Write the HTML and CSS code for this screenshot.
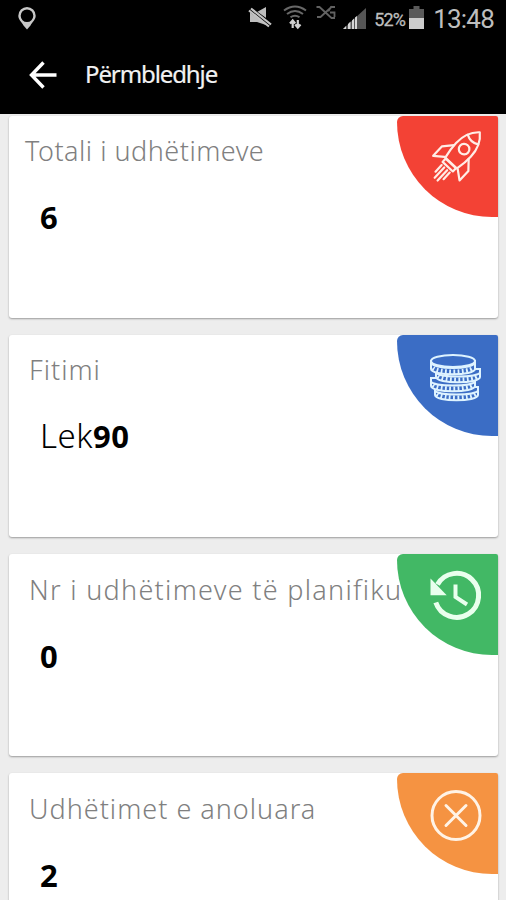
FILE: index.html
```html
<!DOCTYPE html>
<html lang="sq">
<head>
    <meta charset="UTF-8">
    <meta name="viewport" content="width=device-width, initial-scale=1.0">
    <title>Përmbledhje</title>
    <link rel="stylesheet" href="styles.css">
</head>
<body>
    <header class="header">
        <!-- Status bar -->
        <div class="status-bar">
            <svg class="pin" width="18" height="23" viewBox="0 0 18 23">
                <path fill="#c8c8c8" fill-rule="evenodd" d="M9 0a8.700 8.700 0 0 0-8.700 8.700C.3 13 4 15 5.500 18.500L9 22.500l3.500-4C14 15 17.700 13 17.700 8.700A8.700 8.700 0 0 0 9 0zm0 2.400a6.300 6.300 0 1 1 0 12.600A6.300 6.300 0 0 1 9 2.400z"/>
            </svg>
            <svg class="signals" width="122" height="30" viewBox="0 0 122 30">
                <!-- muted -->
                <path fill="#bdbdbd" d="M2 12h7l9-5v18l-9-3H2z"/>
                <path stroke="#000" stroke-width="5" d="M0 8l25 18"/>
                <path stroke="#c4c4c4" stroke-width="2.200" d="M1 10.500l20 16M3 8.500l20 16"/>
                <!-- wifi -->
                <g fill="none" stroke="#686868" stroke-width="2">
                    <path d="M36 10.500q11-8 22 0M39 14q8-6 16 0M42.500 17.300q4.500-3.300 9 0"/>
                </g>
                <path fill="none" stroke="#d0d0d0" stroke-width="2.200" d="M44.700 28v-7M49.800 20v7M42 23.500l2.700-3 2.500 3M47.200 24.500l2.600 3 2.700-3"/>
                <!-- no data -->
                <path fill="none" stroke="#626262" stroke-width="1.800" d="M68.500 7h3l12 11h3.500M69 17h3.500L84 6.500M87 7h-4l-2.500 4M82 12.500h4.500V17"/>
                <!-- signal -->
                <path fill="#555" d="M118 8v21H95z"/>
                <path fill="#d6d6d6" d="M95 29l3-3v3zM100 29v-5l2.500-2.500V29zM104 29v-8.500l2-2V29zM107 29V17.500l2-1.500v13z"/>
            </svg>
            <span class="percent">52%</span>
            <svg class="battery" width="15" height="23" viewBox="0 0 15 23">
                <path fill="#5a5a5a" d="M4.500 0h6v3H15v20H0V3h4.500z"/>
                <path fill="#ccc" d="M0 12h15v11H0z"/>
            </svg>
            <span class="clock">13:48</span>
        </div>
        <div class="app-bar">
            <svg class="back" width="28" height="28" viewBox="0 0 28 28">
                <path fill="none" stroke="#fff" stroke-width="3.400" d="M14.500 1.500L2.500 14l12 12.500M3 14H27.500"/>
            </svg>
            <h1>Përmbledhje</h1>
        </div>
    </header>

    <main class="cards">
        <section class="card total">
            <h2>Totali i udhëtimeve</h2>
            <p class="value"><b>6</b></p>
            <div class="badge red">
                <svg width="101" height="101" viewBox="0 0 101 101">
                    <g fill="none" stroke="#ffede6" stroke-width="2.200" stroke-linejoin="round" stroke-linecap="round" transform="translate(63 37.500) rotate(43)">
                        <path d="M0-29C-7-23-10-14-10-5c0 7 1 13 2 18H8c1-5 2-11 2-18C10-14 7-23 0-29z"/>
                        <path d="M-7-19q7 4 14 0"/>
                        <circle cx="0" cy="-6" r="5.300"/>
                        <path d="M-10-2l-8 9v13l9-7M10-2l8 9v13l-9-7"/>
                        <path d="M-7 13.500H7V18H-7z"/>
                        <path d="M-5.500 21v9M-2 21v14M2 21v14M5.500 21v9"/>
                    </g>
                </svg>
            </div>
        </section>

        <section class="card profit">
            <h2>Fitimi</h2>
            <p class="value">Lek<b>90</b></p>
            <div class="badge blue">
                <svg width="101" height="101" viewBox="0 0 101 101">
                    <g fill="#3b6dc5" stroke="#def3ff" stroke-width="2">
                        <path d="M38 52v8c0 7 43 7 43 0v-8z"/>
                        <path d="M34 43v8c0 7 44 7 44 0v-8z"/>
                        <path d="M39 34v8c0 7 44 7 44 0v-8z"/>
                        <path d="M34 26v8c0 7 44 7 44 0v-8z"/>
                        <ellipse cx="56" cy="26" rx="22" ry="6"/>
                    </g>
                    <g fill="none" stroke="#def3ff" stroke-width="2">
                        <path d="M34 27c0 8 44 8 44 0M39 37c0 6 44 6 44 0M34 46c0 6 44 6 44 0M38 55c0 6 43 6 43 0"/>
                        <g stroke-width="4.500" stroke-dasharray="1.800 2.400">
                            <path d="M36 33c5 5 35 5 40 0M41 41c5 5 35 5 40 0M36 50c5 5 35 5 40 0M40 59c5 5 34 5 39 0"/>
                        </g>
                    </g>
                </svg>
            </div>
        </section>

        <section class="card planned">
            <h2>Nr i udhëtimeve të planifiku</h2>
            <p class="value"><b>0</b></p>
            <div class="badge green">
                <svg width="101" height="101" viewBox="0 0 101 101">
                    <path fill="none" stroke="#e9ffed" stroke-width="5" d="M38.800 48.500A22 22 0 1 0 40.500 30.500"/>
                    <path fill="#e9ffed" d="M33.500 24.500v16.800h16.200z"/>
                    <path fill="none" stroke="#e9ffed" stroke-width="4" d="M58.500 30.500V43l11.500 7.500"/>
                </svg>
            </div>
        </section>

        <section class="card cancelled">
            <h2>Udhëtimet e anoluara</h2>
            <p class="value"><b>2</b></p>
            <div class="badge orange">
                <svg width="101" height="101" viewBox="0 0 101 101">
                    <g fill="none" stroke="#fff3e6" stroke-width="3">
                        <circle cx="59" cy="42.500" r="24"/>
                        <path stroke-linecap="round" d="M49 32.500l20 20M69 32.500l-20 20"/>
                    </g>
                </svg>
            </div>
        </section>
    </main>
</body>
</html>
```
FILE: styles.css
```css
body {
    margin: 0;
    height: 900px;
    overflow: hidden;
    background: #ededed;
    font-family: 'Noto Sans', sans-serif;
}

.header {
    height: 114px;
    background: #000;
    color: #f2f2f2;
}

.status-bar {
    display: flex;
    height: 36px;
    padding: 0 12px 0 18px;
    color: #bebebe;
    font-family: Roboto, sans-serif;
}

.pin {
    margin-top: 7px;
}

.signals {
    margin-left: auto;
}

.percent {
    margin-left: 4px;
    font-size: 18px;
    line-height: 39px;
    letter-spacing: -0.8px;
    -webkit-text-stroke: 0.3px #bebebe;
}

.battery {
    margin: 6px 0 0 4px;
}

.clock {
    margin-left: 9px;
    font-size: 26px;
    line-height: 39px;
    letter-spacing: -0.8px;
}

.app-bar {
    display: flex;
    align-items: center;
    height: 78px;
    padding-left: 29px;
}

h1 {
    margin: -3px 0 0 28px;
    font-size: 24px;
    font-weight: 400;
    letter-spacing: -1.1px;
    -webkit-text-stroke: 0.2px #f2f2f2;
}

.cards {
    display: flex;
    flex-direction: column;
    gap: 17px;
    height: 786px;
    box-sizing: border-box;
    overflow: hidden;
    padding: 2px 8px 0 9px;
}

.card {
    flex: none;
    position: relative;
    height: 202px;
    box-sizing: border-box;
    padding: 17px 0 0 20px;
    background: #fff;
    border-radius: 3px;
    box-shadow: 0 1px 2px rgba(0, 0, 0, 0.35);
}

.card.total {
    padding-left: 16px;
}

.card.planned,
.card.cancelled {
    padding-top: 18px;
}

h2 {
    margin: 0;
    white-space: nowrap;
    color: #808080;
    font-size: 27px;
    font-weight: 300;
    line-height: 36px;
    letter-spacing: 1px;
}

.total h2 {
    letter-spacing: 0.5px;
}

.planned h2 {
    letter-spacing: 1.3px;
}

.value {
    margin: 27px 0 0 11px;
    color: #000;
    font-size: 33px;
    font-weight: 300;
    line-height: 42px;
    letter-spacing: 0.5px;
}

.total .value {
    margin-left: 15px;
}

.value b {
    font-size: 31px;
    font-weight: 700;
}

/* Corner badges */
.badge {
    position: absolute;
    top: 0;
    right: 0;
    width: 101px;
    height: 101px;
    overflow: hidden;
    border-radius: 6px 2px 0 95px;
}

.badge svg {
    display: block;
}

.red {
    background: #f34235;
}

.blue {
    background: #3b6dc5;
}

.green {
    background: #42b865;
}

.orange {
    background: #f59342;
}
```
